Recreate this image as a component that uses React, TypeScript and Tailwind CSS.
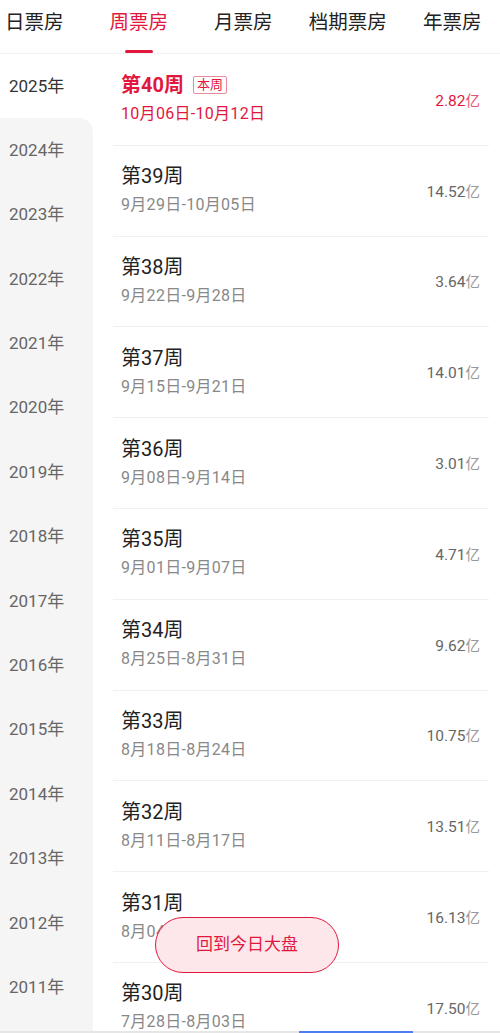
import React from 'react'

const RED = 'text-[#e2173d]'

const tabs = ['日票房', '周票房', '月票房', '档期票房', '年票房']

const years = [
  '2025', '2024', '2023', '2022', '2021', '2020', '2019', '2018',
  '2017', '2016', '2015', '2014', '2013', '2012', '2011'
]

interface Week {
  week: number
  range: string
  value: string
}

const weeks: Week[] = [
  { week: 40, range: '10月06日-10月12日', value: '2.82' },
  { week: 39, range: '9月29日-10月05日', value: '14.52' },
  { week: 38, range: '9月22日-9月28日', value: '3.64' },
  { week: 37, range: '9月15日-9月21日', value: '14.01' },
  { week: 36, range: '9月08日-9月14日', value: '3.01' },
  { week: 35, range: '9月01日-9月07日', value: '4.71' },
  { week: 34, range: '8月25日-8月31日', value: '9.62' },
  { week: 33, range: '8月18日-8月24日', value: '10.75' },
  { week: 32, range: '8月11日-8月17日', value: '13.51' },
  { week: 31, range: '8月04日-8月10日', value: '16.13' },
  { week: 30, range: '7月28日-8月03日', value: '17.50' }
]

const WeekRow: React.FC<{ item: Week; current?: boolean }> = ({ item, current }) => (
  <div className="ml-[20px] mr-[11px] h-[90.8px] shrink-0 border-b border-[#f0f0f0] pl-[8px] pr-[9px] flex items-center justify-between">
    <div className="flex flex-col">
      <div className="flex items-center h-[24px]">
        <span className={current ? `text-[20px] font-bold ${RED}` : 'text-[20px] text-[#222]'}>
          第{item.week}周
        </span>
        {current && (
          <span className={`ml-[9px] h-[18px] px-[3px] border border-[#eb8a9c] rounded-[2px] text-[13px] leading-[16px] ${RED}`}>
            本周
          </span>
        )}
      </div>
      <div className={current ? `mt-[5px] text-[16px] tracking-[0.3px] ${RED}` : 'mt-[5px] text-[16px] tracking-[0.3px] text-[#888]'}>
        {item.range}
      </div>
    </div>
    <div className={current ? `mt-[3px] text-[15.5px] ${RED}` : 'mt-[3px] text-[15.5px] text-[#666]'}>
      {item.value}
      <span className={current ? 'text-[14.5px] text-[#e8566f]' : 'text-[14.5px] text-[#999]'}>亿</span>
    </div>
  </div>
)

export default function App() {
  return (
    <div
      className="relative w-[500px] h-[1033px] overflow-hidden bg-white flex flex-col"
      style={{ fontFamily: "Roboto, 'Noto Sans CJK SC', sans-serif" }}
    >
      {/* Tabs */}
      <div className="h-[54px] shrink-0 border-b border-[#f2f2f2] overflow-hidden">
        <div className="flex ml-[-18px] h-full">
          {tabs.map((t, i) => (
            <div key={t} className="w-[104.5px] shrink-0 flex flex-col items-center relative">
              <span className={i === 1 ? `mt-[8px] text-[19.5px] ${RED}` : 'mt-[8px] text-[19.5px] text-[#222]'}>
                {t}
              </span>
              {i === 1 && (
                <span className="absolute bottom-[0px] w-[28px] h-[3px] rounded-full bg-[#e2173d]" />
              )}
            </div>
          ))}
        </div>
      </div>

      <div className="flex flex-1 min-h-0 pt-[1px]">
        {/* Year sidebar */}
        <div className="w-[93px] shrink-0 flex flex-col">
          <div className="h-[63.4px] shrink-0 flex items-center pl-[9px] text-[17px] text-[#333]">
            {years[0]}年
          </div>
          <div className="flex-1 bg-[#f5f5f5] rounded-tr-[14px] flex flex-col">
            {years.slice(1).map(y => (
              <div key={y} className="h-[64.4px] shrink-0 flex items-center pl-[9px] text-[17px] text-[#666]">
                {y}年
              </div>
            ))}
          </div>
        </div>

        {/* Weeks */}
        <div className="flex-1 flex flex-col">
          {weeks.map((w, i) => (
            <WeekRow key={w.week} item={w} current={i === 0} />
          ))}
        </div>
      </div>

      {/* Back to today */}
      <div className={`absolute left-[155px] top-[917px] w-[184px] h-[56px] rounded-full border border-[#e2173d] bg-[#fde7eb] flex items-center justify-center text-[17px] ${RED}`}>
        回到今日大盘
      </div>

      <div className="absolute left-0 right-0 bottom-0 h-[2px] bg-[#e6e6e6]">
        <div className="absolute left-[299px] w-[114px] h-[2px] bg-[#4d7cf5]" />
      </div>
    </div>
  )
}
